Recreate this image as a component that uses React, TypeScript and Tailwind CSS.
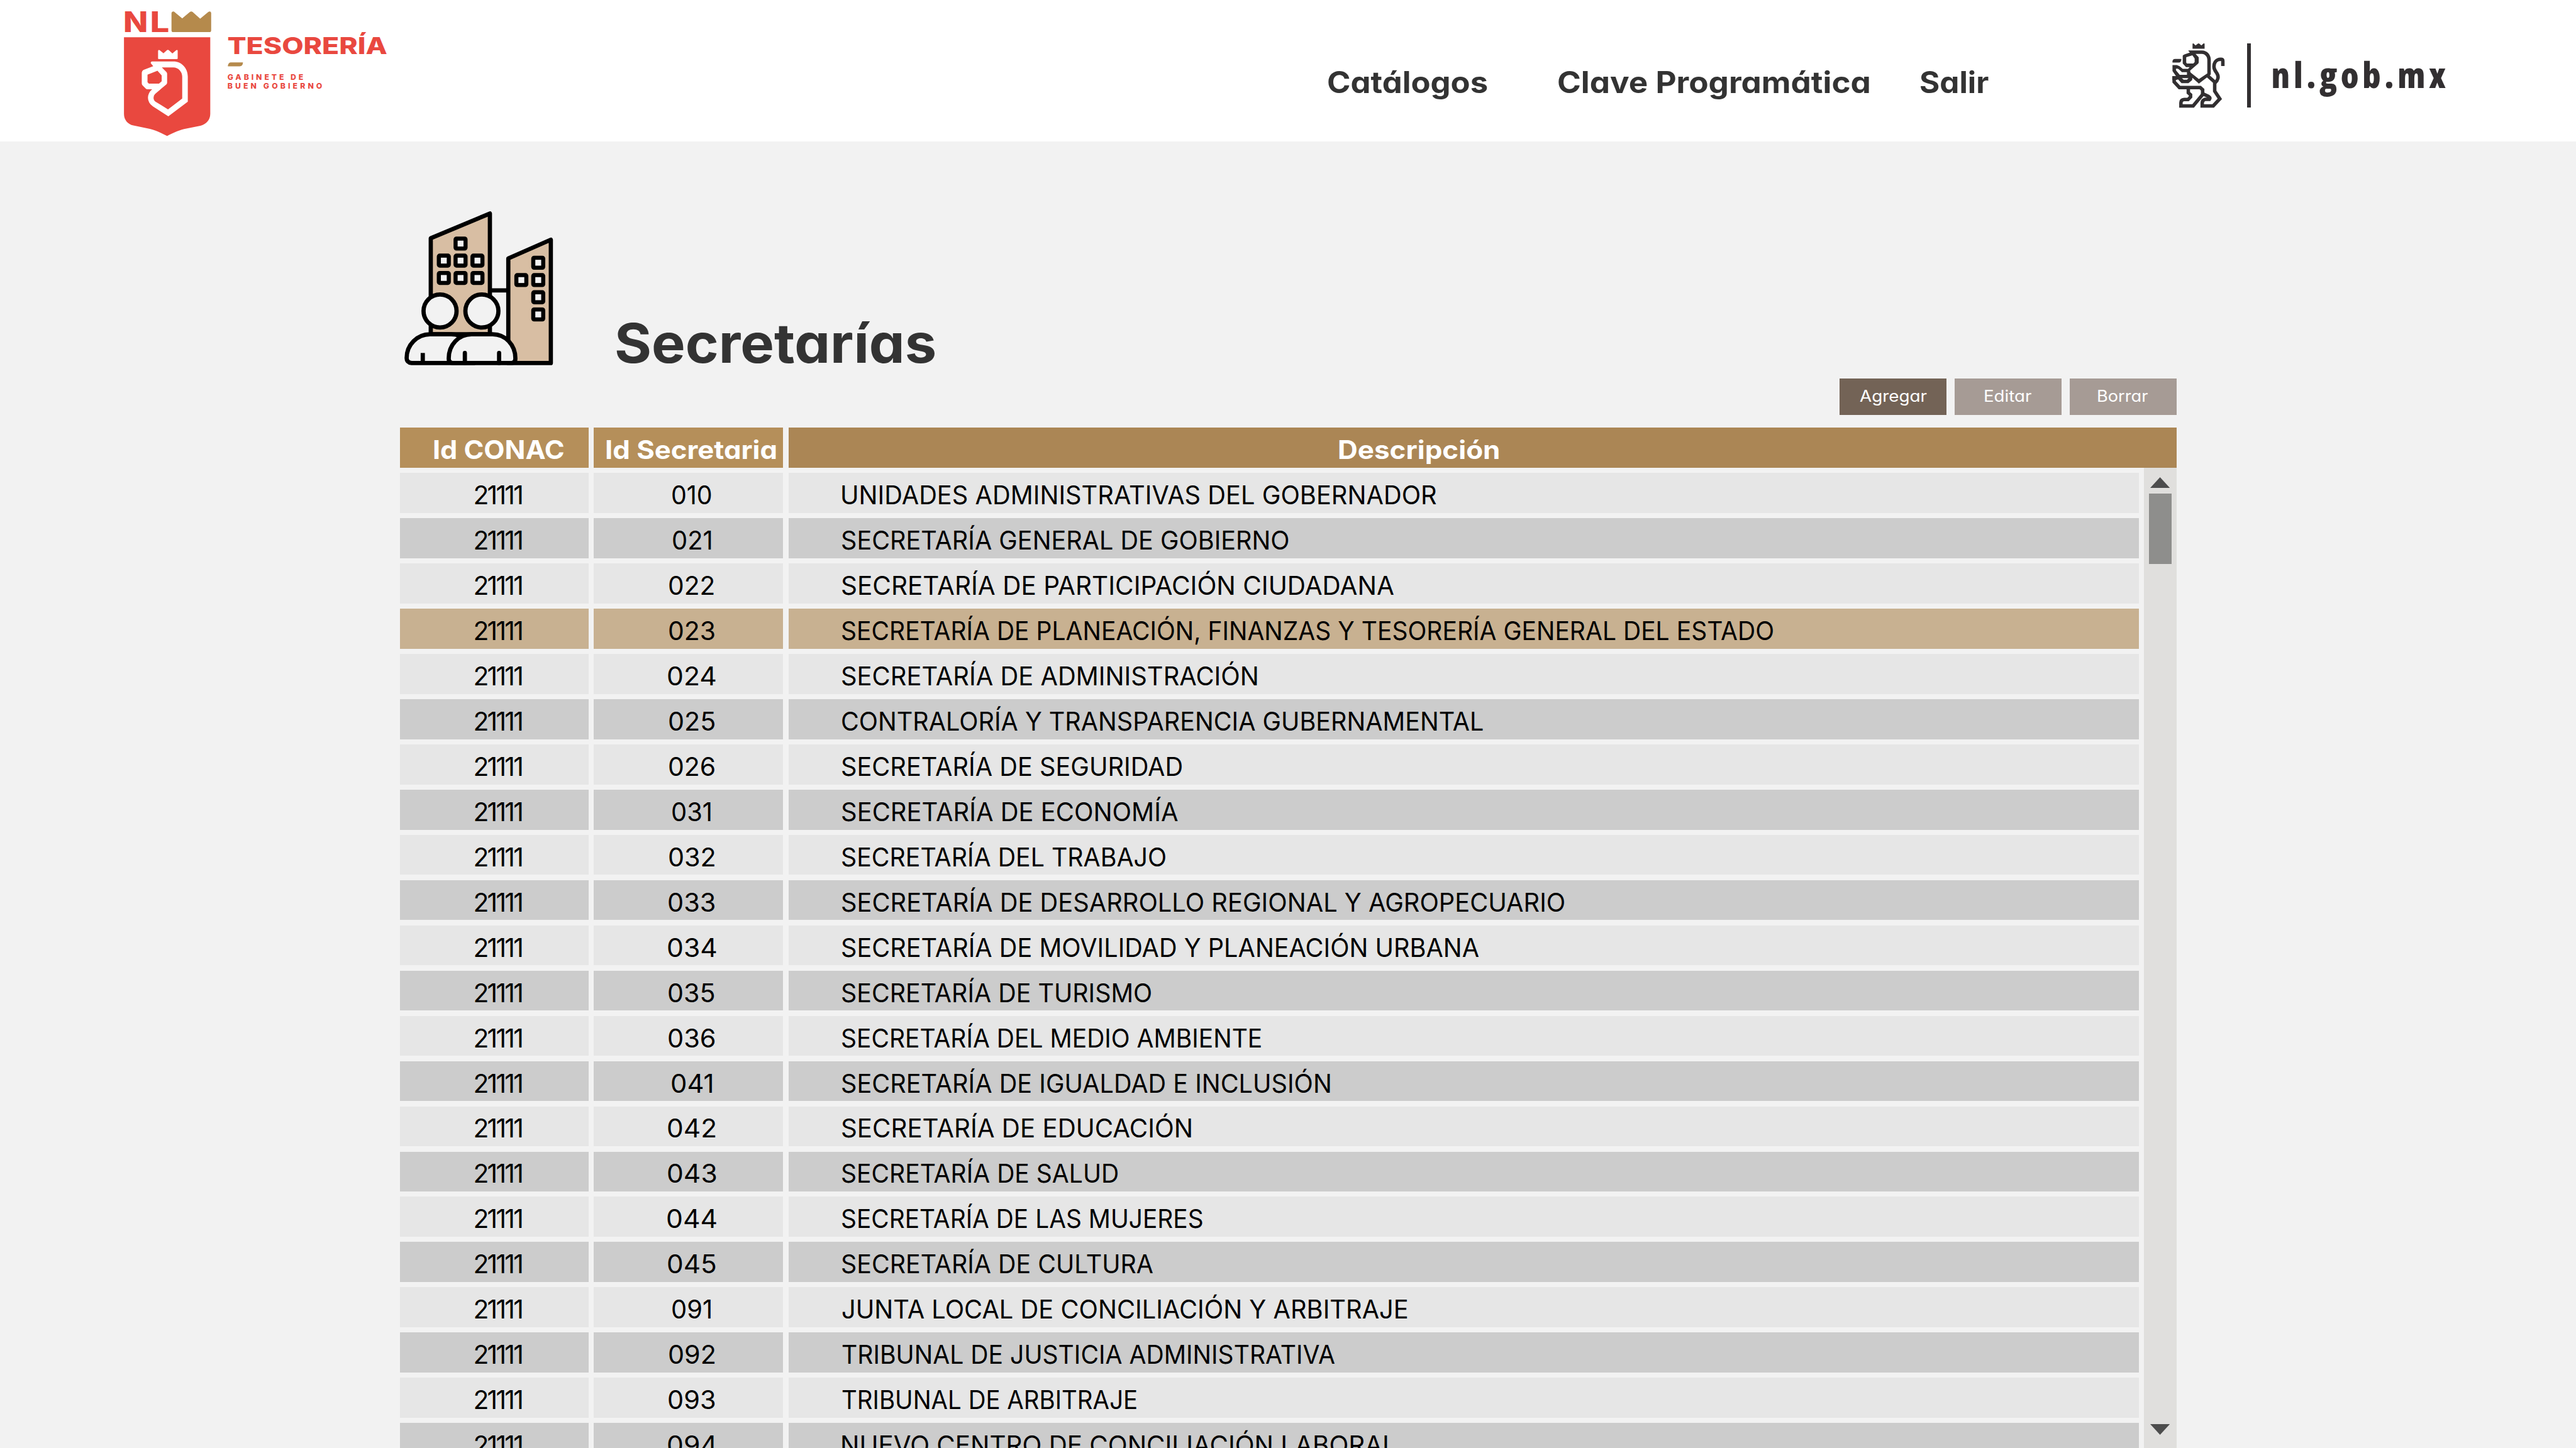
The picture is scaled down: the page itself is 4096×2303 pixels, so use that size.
import React, { useLayoutEffect, useRef, useState } from "react";

type FitProps = { text: string; width: number; className?: string; mode?: "stretch" | "track" };

/**
 * Sets a single line of text so that its ink spans exactly `width` pixels,
 * either by stretching the glyphs or by tracking them.
 */
function Fit({ text, width, className = "", mode = "stretch" }: FitProps) {
  const ref = useRef<HTMLSpanElement>(null);
  const [fit, setFit] = useState({ spacing: 0, lead: 0, scale: 1 });

  useLayoutEffect(() => {
    const el = ref.current;
    const ctx = document.createElement("canvas").getContext("2d");
    if (!el || !ctx) return;
    const cs = getComputedStyle(el);
    ctx.font = `${cs.fontWeight} ${cs.fontSize} ${cs.fontFamily}`;
    const m = ctx.measureText(text);
    const lead = -m.actualBoundingBoxLeft;
    const trail = m.width - m.actualBoundingBoxRight;
    const previous = el.style.letterSpacing;
    el.style.letterSpacing = "0px";
    const natural = el.offsetWidth - lead - trail;
    el.style.letterSpacing = previous;
    if (mode === "track") {
      setFit({ spacing: (width - natural) / (text.length - 1), lead, scale: 1 });
    } else {
      setFit({ spacing: 0, lead: (lead * width) / natural, scale: width / natural });
    }
  }, [text, width, mode]);

  return (
    <span className={`block shrink-0 whitespace-nowrap text-left ${className}`} style={{ width }}>
      <span
        ref={ref}
        className="inline-block origin-left"
        style={{
          letterSpacing: `${fit.spacing}px`,
          marginLeft: -fit.lead,
          transform: fit.scale === 1 ? undefined : `scaleX(${fit.scale})`,
        }}
      >
        {text}
      </span>
    </span>
  );
}

function TesoreriaLogo() {
  return (
    <svg
      className="ml-[194.3px] mt-[10.8px] h-[212.3px] w-[453.4px] shrink-0 overflow-visible"
      viewBox="0 0 1890 885"
      fill="#e9483f"
      fontFamily="Inter, sans-serif"
    >
      <text x="8" y="167" fontSize="186" fontWeight="800" textLength="164" lengthAdjust="spacingAndGlyphs">N</text>
      <text x="185" y="167" fontSize="186" fontWeight="800" textLength="128" lengthAdjust="spacingAndGlyphs">L</text>
      <path
        fill="#b58a4c"
        d="M328 42Q330 28 345 31L399 76L450 33Q459 27 468 33L518 78L572 33Q588 26 591 40V155Q591 167 579 167H340Q328 167 328 155Z"
      />
      <path d="M13 201H585V710C585 750 555 780 520 788L411 810C370 820 330 840 299 856C265 838 225 818 185 809L75 786C40 780 13 750 13 710Z" />
      <path
        fill="#fff"
        d="M239 291Q242 283 249 287L275 307L298 287Q304 282 310 287L334 308L360 287Q368 283 369 290V341Q369 346 364 346H244Q239 346 239 341Z"
      />
      <path
        fill="#fff"
        fillRule="evenodd"
        d="M190 371Q191 362 200 362H340C395 362 436 406 436 462V628L307 725L205 660Q172 636 172 602Q173 568 200 546H168Q162 546 158 542L136 520Q131 515 131 508V436Q132 424 142 418L207 393L192 375ZM169 449L235 423L263 454V493L245 509H178L169 499ZM264 401H340C374 401 399 430 399 462V608L305 679L222 628Q209 618 209 602Q209 586 220 576L294 514Q299 509 299 502V443Q299 438 295 433Z"
      />
      <text x="698" y="314" fontSize="154" fontWeight="800" textLength="1060" lengthAdjust="spacingAndGlyphs">TESORERÍA</text>
      <path fill="#b58a4c" d="M702 394V388Q706 368 722 368H802Q800 394 780 394Z" />
      <text x="699" y="482" fontSize="51" fontWeight="800" textLength="502">GABINETE DE</text>
      <text x="699" y="543" fontSize="51" fontWeight="800" textLength="628">BUEN GOBIERNO</text>
    </svg>
  );
}

function LionEmblem() {
  return (
    <svg
      className="ml-[277.6px] mt-[61.2px] h-[118.7px] w-[107.9px] shrink-0"
      viewBox="0 0 450 495"
      fill="none"
      stroke="#322f31"
      strokeWidth="23"
    >
      <g fill="#322f31" stroke="none">
        <path d="M193 37Q195 31 200 34L213 47L228 35Q233 32 238 35L252 47L265 34Q272 31 273 37V69H193Z" />
        <path d="M60 161V150Q64 137 76 137H119Q119 161 102 161Z" />
        <path
          fillRule="evenodd"
          d="M128 115Q130 110 140 106L176 94L166 84V80H255C290 80 314 108 314 140V240L235 300L192 262L190 277L166 297H120L97 272L84 276L59 276V250H83L60 217V177H88Q105 180 128 202H163L174 191H150L128 167ZM151 125L192 113L207 133V157L198 167H156L151 161ZM213 103H255C276 103 291 122 291 142V233L235 270L182 228Q176 222 177 214L230 168Q234 164 234 158V128Q233 124 230 121ZM83 201H95Q105 206 122 224H156V242H108L83 212ZM122 264H166L156 274H134Z"
        />
      </g>
      <path d="M71 252V288L106 326H244L260 341V372" />
      <path d="M165 328V361L180 374V388L163 406H138Q116 408 116 428V448H197L262 370" />
      <path d="M262 368L300 386Q314 394 305 405H275Q257 410 257 430V448H330L374 401L340 350V290L292 247" />
      <path d="M394 183V150Q394 139 380 139C348 139 335 163 335 188C335 208 345 218 354 231C370 255 361 278 343 294" />
    </svg>
  );
}

const WINDOWS: [number, number][] = [
  [426, 247], [315, 360], [426, 360], [538, 360], [315, 475], [426, 475], [538, 475],
  [941, 374], [829, 489], [941, 489], [941, 603], [941, 717],
];

function BuildingsIcon() {
  return (
    <svg
      className="h-[287.8px] w-[287.8px] shrink-0"
      viewBox="0 0 1200 1200"
      fill="#f2f2f2"
      stroke="#000"
      strokeWidth="28"
      strokeLinejoin="round"
    >
      <path fill="#d8bea3" d="M275 895V258L667 94V895Z" />
      <path fill="#d8bea3" d="M789 1086V392L1071 268V1086Z" />
      <path d="M667 604H789" />
      {WINDOWS.map(([x, y]) => (
        <rect key={`${x}-${y}`} x={x + 19.5} y={y + 19.5} width="54" height="54" strokeWidth="39" stroke="#000" />
      ))}
      {WINDOWS.map(([x, y]) => (
        <rect key={`pane-${x}-${y}`} x={x + 27} y={y + 27} width="39" height="39" stroke="none" />
      ))}
      <circle cx="336.5" cy="740.5" r="109.5" />
      <circle cx="614" cy="740.5" r="109.5" />
      <path d="M115 1053C115 965 185 895 270 895H410C495 895 560 965 560 1053V1086H148Q115 1082 115 1053Z" />
      <path d="M222 1019V1086" />
      <path d="M394 1055C394 965 460 895 545 895H685C770 895 836 965 836 1055Q836 1086 808 1086H422Q394 1086 394 1055Z" />
      <path strokeLinecap="round" d="M501 1019V1086M728 1019V1086" />
    </svg>
  );
}

const ROWS: { id: string; idWidth: number; name: string; width: number }[] = [
  { id: "010", idWidth: 62, name: "UNIDADES ADMINISTRATIVAS DEL GOBERNADOR", width: 945.3 },
  { id: "021", idWidth: 60, name: "SECRETARÍA GENERAL DE GOBIERNO", width: 709.8 },
  { id: "022", idWidth: 71, name: "SECRETARÍA DE PARTICIPACIÓN CIUDADANA", width: 877.3 },
  { id: "023", idWidth: 72, name: "SECRETARÍA DE PLANEACIÓN, FINANZAS Y TESORERÍA GENERAL DEL ESTADO", width: 1480.1 },
  { id: "024", idWidth: 75, name: "SECRETARÍA DE ADMINISTRACIÓN", width: 660.4 },
  { id: "025", idWidth: 72, name: "CONTRALORÍA Y TRANSPARENCIA GUBERNAMENTAL", width: 1019.8 },
  { id: "026", idWidth: 72, name: "SECRETARÍA DE SEGURIDAD", width: 540.8 },
  { id: "031", idWidth: 61, name: "SECRETARÍA DE ECONOMÍA", width: 534.4 },
  { id: "032", idWidth: 72, name: "SECRETARÍA DEL TRABAJO", width: 514.3 },
  { id: "033", idWidth: 73, name: "SECRETARÍA DE DESARROLLO REGIONAL Y AGROPECUARIO", width: 1147.9 },
  { id: "034", idWidth: 76, name: "SECRETARÍA DE MOVILIDAD Y PLANEACIÓN URBANA", width: 1012.6 },
  { id: "035", idWidth: 73, name: "SECRETARÍA DE TURISMO", width: 491.4 },
  { id: "036", idWidth: 73, name: "SECRETARÍA DEL MEDIO AMBIENTE", width: 666.1 },
  { id: "041", idWidth: 64, name: "SECRETARÍA DE IGUALDAD E INCLUSIÓN", width: 776.3 },
  { id: "042", idWidth: 75, name: "SECRETARÍA DE EDUCACIÓN", width: 555.1 },
  { id: "043", idWidth: 76, name: "SECRETARÍA DE SALUD", width: 439.1 },
  { id: "044", idWidth: 77, name: "SECRETARÍA DE LAS MUJERES", width: 572.3 },
  { id: "045", idWidth: 76, name: "SECRETARÍA DE CULTURA", width: 495 },
  { id: "091", idWidth: 61, name: "JUNTA LOCAL DE CONCILIACIÓN Y ARBITRAJE", width: 898 },
  { id: "092", idWidth: 72, name: "TRIBUNAL DE JUSTICIA ADMINISTRATIVA", width: 783.5 },
  { id: "093", idWidth: 73, name: "TRIBUNAL DE ARBITRAJE", width: 467.8 },
  { id: "094", idWidth: 76, name: "NUEVO CENTRO DE CONCILIACIÓN LABORAL", width: 881 },
];

const SELECTED = "023";

function rowColor(id: string, index: number) {
  if (id === SELECTED) return "bg-[#c8b191]";
  return index % 2 === 0 ? "bg-[#e6e6e6]" : "bg-[#cccccc]";
}

function Header() {
  return (
    <header className="flex h-[224.5px] shrink-0 items-start bg-white text-[#333333]">
      <TesoreriaLogo />
      <nav className="ml-[1464.3px] mt-[100.7px] flex text-[47.5px] font-bold leading-[60px]">
        <Fit text="Catálogos" width={252.6} />
        <Fit text="Clave Programática" width={494.1} className="ml-[113.1px]" />
        <Fit text="Salir" width={108.7} className="ml-[81.6px]" />
      </nav>
      <LionEmblem />
      <div className="ml-[25.3px] mt-[69.1px] h-[102.2px] w-[5.7px] shrink-0 bg-[#322f31]" />
      <Fit
        text="nl.gob.mx"
        width={274}
        mode="track"
        className="ml-[36.1px] mt-[87.6px] font-['Open_Sans'] text-[56px] font-extrabold leading-[60px] text-[#322f31] [font-stretch:87%]"
      />
    </header>
  );
}

function ActionButton({ label, width, className }: { label: string; width: number; className: string }) {
  return (
    <button
      className={`flex h-[58.1px] w-[170px] items-center justify-center pb-[2px] text-[25.8px] leading-[30px] text-white ${className}`}
    >
      <Fit text={label} width={width} />
    </button>
  );
}

function DataTable() {
  return (
    <div className="flex h-[1622.7px] w-[2825px] flex-col overflow-hidden text-[40.8px] leading-[50px] text-black">
      <div className="flex h-[63.6px] shrink-0 font-bold text-white">
        <div className="flex w-[300.7px] items-center bg-[#b58f5a] pl-[54.3px] pt-[6.2px]">
          <Fit text="Id CONAC" width={205.8} />
        </div>
        <div className="ml-[7.7px] flex w-[300.7px] items-center bg-[#b58f5a] pl-[20.3px] pt-[6.2px]">
          <Fit text="Id Secretaria" width={270.3} />
        </div>
        <div className="ml-[8.9px] flex grow items-center bg-[#ab8655] pl-[875.2px] pt-[6.2px]">
          <Fit text="Descripción" width={254} />
        </div>
      </div>
      <div className="flex min-h-0 grow">
        <div className="flex w-[2765px] flex-col gap-[8.36px] pt-[8.36px]">
          {ROWS.map((row, i) => (
            <div key={row.id} className="flex h-[63.6px] shrink-0">
              <div className={`flex w-[300.7px] items-center pl-[119.9px] pt-[6.2px] ${rowColor(row.id, i)}`}>
                <Fit text="21111" width={73.4} mode="track" />
              </div>
              <div
                className={`ml-[7.7px] flex w-[300.7px] items-center justify-center pl-[10.6px] pt-[6.2px] ${rowColor(row.id, i)}`}
              >
                <Fit text={row.id} width={row.idWidth} />
              </div>
              <div className={`ml-[8.9px] flex grow items-center pl-[85.6px] pt-[6.2px] ${rowColor(row.id, i)}`}>
                <Fit text={row.name} width={row.width} />
              </div>
            </div>
          ))}
        </div>
        <div className="ml-auto flex w-[51.2px] flex-col items-center bg-[#e0dfdd] pb-[21.4px] pt-[15.5px]">
          <svg className="h-[17px] w-[31.2px] shrink-0" viewBox="0 0 31.2 17" fill="#4d4d4d">
            <path d="M15.6 0L31.2 17H0Z" />
          </svg>
          <div className="mt-[8.9px] h-[111.3px] w-[36.1px] shrink-0 bg-[#8e8e8c]" />
          <svg className="mt-auto h-[17px] w-[31.2px] shrink-0" viewBox="0 0 31.2 17" fill="#4d4d4d">
            <path d="M0 0H31.2L15.6 17Z" />
          </svg>
        </div>
      </div>
    </div>
  );
}

export default function App() {
  return (
    <div className="flex h-[2303px] w-[4096px] flex-col overflow-hidden bg-[#f2f2f2] font-['Inter',sans-serif] [font-feature-settings:'cv11']">
      <Header />
      <main className="ml-[635.6px] flex w-[2825px] flex-col pt-[92.1px]">
        <div className="-ml-[16.7px] flex h-[285px] items-start text-[#333333]">
          <BuildingsIcon />
          <h1 className="ml-[73.2px] mt-[179.6px] text-[86px] font-bold leading-[100px]">
            <Fit text="Secretarías" width={507.3} />
          </h1>
        </div>
        <div className="mb-[20.6px] flex justify-end gap-[12.6px]">
          <ActionButton label="Agregar" width={107} className="bg-[#736356]" />
          <ActionButton label="Editar" width={74.2} className="bg-[#a69b95]" />
          <ActionButton label="Borrar" width={79.3} className="bg-[#a69b95]" />
        </div>
        <DataTable />
      </main>
    </div>
  );
}
